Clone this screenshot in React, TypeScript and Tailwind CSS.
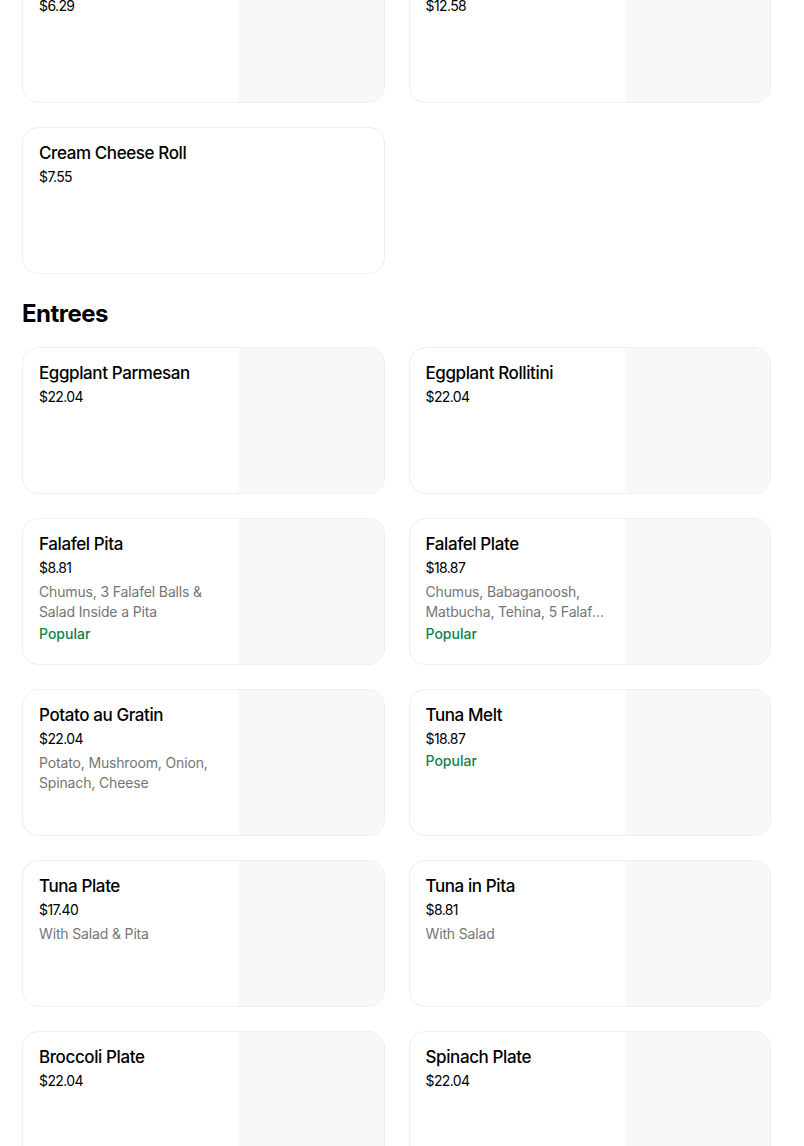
import React from "react";

type Item = {
  name: string;
  price: string;
  description?: string;
  popular?: boolean;
  image?: boolean;
};

const sides: Item[] = [
  { name: "Bagel with Butter", price: "$6.29", image: true },
  { name: "Lox Bagel", price: "$12.58", image: true },
  { name: "Cream Cheese Roll", price: "$7.55" },
];

const entrees: Item[] = [
  { name: "Eggplant Parmesan", price: "$22.04", image: true },
  { name: "Eggplant Rollitini", price: "$22.04", image: true },
  {
    name: "Falafel Pita",
    price: "$8.81",
    description: "Chumus, 3 Falafel Balls & Salad Inside a Pita",
    popular: true,
    image: true,
  },
  {
    name: "Falafel Plate",
    price: "$18.87",
    description: "Chumus, Babaganoosh, Matbucha, Tehina, 5 Falafel Balls & Salad",
    popular: true,
    image: true,
  },
  {
    name: "Potato au Gratin",
    price: "$22.04",
    description: "Potato, Mushroom, Onion, Spinach, Cheese",
    image: true,
  },
  { name: "Tuna Melt", price: "$18.87", popular: true, image: true },
  { name: "Tuna Plate", price: "$17.40", description: "With Salad & Pita", image: true },
  { name: "Tuna in Pita", price: "$8.81", description: "With Salad", image: true },
  { name: "Broccoli Plate", price: "$22.04", image: true },
  { name: "Spinach Plate", price: "$22.04", image: true },
];

function ItemCard({ item }: { item: Item }) {
  return (
    <div className="flex h-[147px] overflow-hidden rounded-2xl border border-[#efefef] bg-white">
      <div className="flex min-w-0 flex-1 flex-col px-4 pt-[13px]">
        <p className="text-[17px] font-medium leading-6 tracking-[-0.4px] text-black">{item.name}</p>
        <p className="mt-[2px] text-[14px] leading-5 tracking-[-0.6px] text-black">{item.price}</p>
        {item.description && (
          <p className="mt-[4px] line-clamp-2 text-[14px] leading-5 tracking-[-0.15px] text-[#757575]">
            {item.description}
          </p>
        )}
        {item.popular && (
          <p className="mt-[2px] text-[14px] font-medium leading-5 text-[#0e8345]">Popular</p>
        )}
      </div>
      {item.image && <div className="h-full w-[145px] shrink-0 bg-[#f8f8f8]" />}
    </div>
  );
}

export default function App() {
  return (
    <div
      className="min-h-screen bg-white pl-[22px] pr-[33px]"
      style={{ fontFamily: "Inter, 'Noto Sans', sans-serif" }}
    >
      <div className="-mt-[44px] grid grid-cols-2 gap-x-[24px] gap-y-[24px]">
        {sides.map((item) => (
          <ItemCard key={item.name} item={item} />
        ))}
      </div>
      <h2 className="mt-[25px] mb-[18px] text-[24px] font-bold leading-[30px] tracking-[-0.5px] text-black">
        Entrees
      </h2>
      <div className="grid grid-cols-2 gap-x-[24px] gap-y-[24px] pb-10">
        {entrees.map((item) => (
          <ItemCard key={item.name} item={item} />
        ))}
      </div>
    </div>
  );
}
